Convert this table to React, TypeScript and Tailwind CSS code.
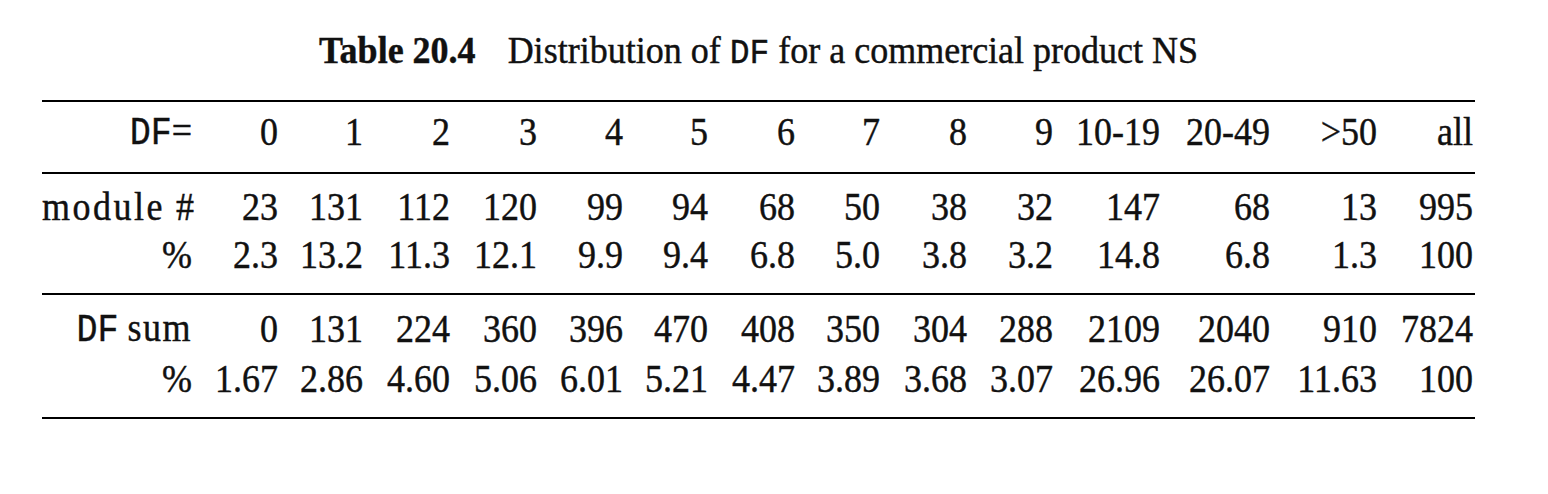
import React from "react";

const serif = "font-['Liberation_Serif','Times_New_Roman',serif]";
const mono = "font-['Liberation_Mono','Courier_New',monospace]";

const colW = [
  "w-[86px]", "w-[85px]", "w-[87px]", "w-[87px]", "w-[86px]", "w-[85px]", "w-[87px]",
  "w-[85px]", "w-[87px]", "w-[86px]", "w-[107px]", "w-[110px]", "w-[107px]", "w-[96px]",
];

const Mono = ({ children }: { children: React.ReactNode }) => (
  <span className={`${mono} text-[35px]`}>{children}</span>
);

function Row({
  label,
  cells,
  cls,
}: {
  label: React.ReactNode;
  cells: string[];
  cls: string;
}) {
  return (
    <div className={`flex items-center scale-y-[1.1] ${cls}`}>
      <div className="w-[150px] text-right whitespace-nowrap">{label}</div>
      {cells.map((c, i) => (
        <div key={i} className={`${colW[i]} text-right whitespace-nowrap`}>
          {c}
        </div>
      ))}
    </div>
  );
}

const Rule = ({ cls }: { cls: string }) => (
  <div className={`h-[2px] bg-black w-[1433px] ${cls}`} />
);

export default function App() {
  return (
    <div
      className={`w-[1548px] h-[494px] bg-white text-[#111] ${serif} overflow-hidden [-webkit-text-stroke:0.4px_#111]`}
    >
      <div className="pl-[42px]">
        <div className="w-[1433px] pt-[31px] h-[72px] text-[36px] leading-[40px] text-center whitespace-nowrap scale-y-[1.06] origin-[50%_63px]">
          <span className="font-bold">Table 20.4</span>
          <span className="inline-block w-[32px]" />
          Distribution of <span className={`${mono} text-[33px]`}>DF</span> for a
          commercial product NS
        </div>
        <Rule cls="mt-[28px]" />
        <div className="pt-[11px] pb-[19px] text-[36px] leading-[40px]">
          <Row
            cls="h-[40px] origin-[50%_32px]"
            label={
              <>
                <Mono>DF</Mono>=
              </>
            }
            cells={["0", "1", "2", "3", "4", "5", "6", "7", "8", "9", "10-19", "20-49", ">50", "all"]}
          />
        </div>
        <Rule cls="" />
        <div className="pt-[10px] text-[36px] leading-[48px]">
          <Row
            cls="h-[48px] origin-[50%_36px]"
            label={
              <>
                <span className="tracking-[2.5px]">module</span>
                <span className="inline-block w-[11px]" />#
              </>
            }
            cells={["23", "131", "112", "120", "99", "94", "68", "50", "38", "32", "147", "68", "13", "995"]}
          />
          <Row
            cls="h-[48px] origin-[50%_36px]"
            label="%"
            cells={["2.3", "13.2", "11.3", "12.1", "9.9", "9.4", "6.8", "5.0", "3.8", "3.2", "14.8", "6.8", "1.3", "100"]}
          />
        </div>
        <Rule cls="mt-[13px]" />
        <div className="pt-[10px] text-[36px] leading-[50px]">
          <Row
            cls="h-[50px] origin-[50%_37px]"
            label={
              <>
                <Mono>DF</Mono> <span className="tracking-[1.5px]">sum</span>
              </>
            }
            cells={["0", "131", "224", "360", "396", "470", "408", "350", "304", "288", "2109", "2040", "910", "7824"]}
          />
          <Row
            cls="h-[50px] origin-[50%_37px]"
            label="%"
            cells={["1.67", "2.86", "4.60", "5.06", "6.01", "5.21", "4.47", "3.89", "3.68", "3.07", "26.96", "26.07", "11.63", "100"]}
          />
        </div>
        <Rule cls="mt-[12px]" />
      </div>
    </div>
  );
}
